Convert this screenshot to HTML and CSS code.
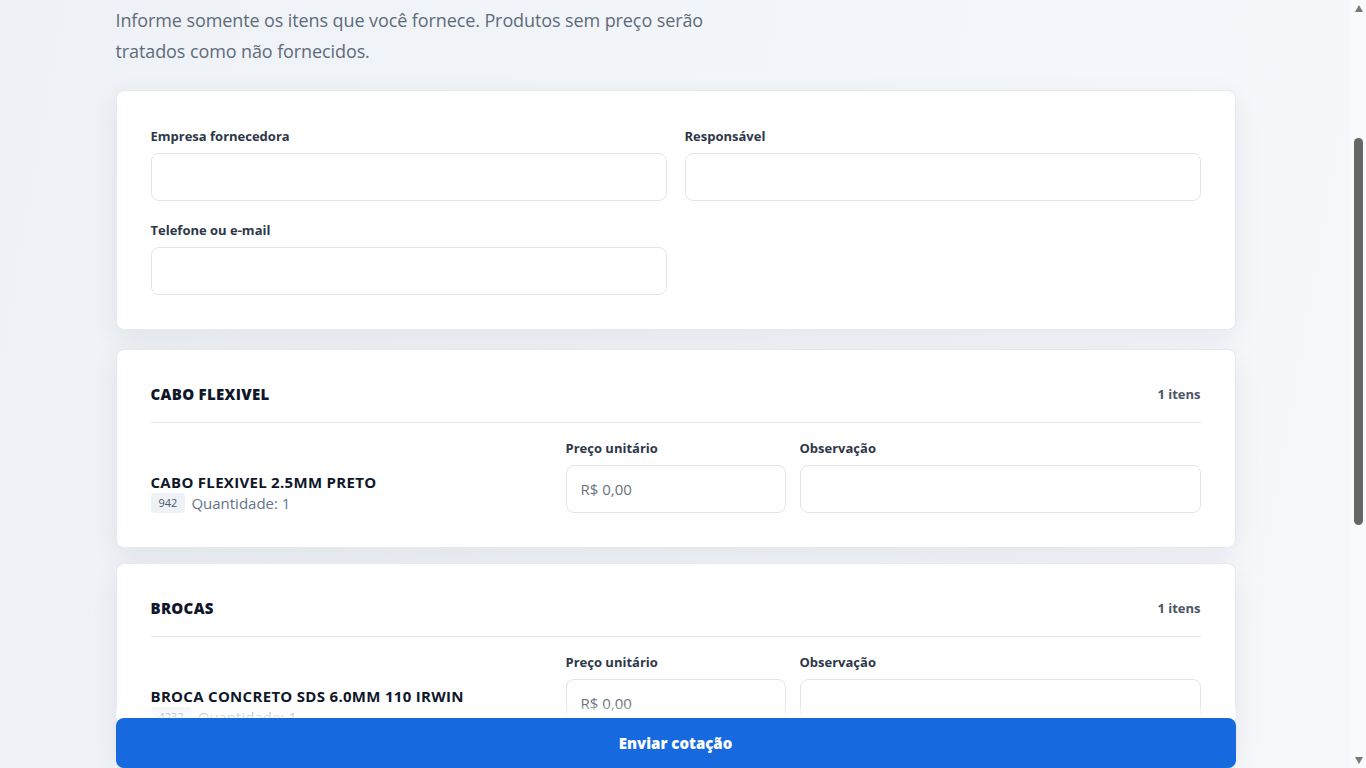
FILE: index.html
```html
<!DOCTYPE html>
<html lang="pt-BR">
<head>
    <meta charset="UTF-8">
    <meta name="viewport" content="width=device-width, initial-scale=1.0">
    <title>Cotação de preços</title>
    <link rel="stylesheet" href="styles.css">
</head>
<body>
    <div class="screen">
        <div class="viewport">
            <main class="page">
                <p class="intro">Informe somente os itens que você fornece. Produtos sem preço serão tratados como não fornecidos.</p>

                <!-- Dados do fornecedor -->
                <section class="card supplier">
                    <div class="field">
                        <label for="empresa">Empresa fornecedora</label>
                        <input type="text" id="empresa">
                    </div>
                    <div class="field">
                        <label for="responsavel">Responsável</label>
                        <input type="text" id="responsavel">
                    </div>
                    <div class="field">
                        <label for="contato">Telefone ou e-mail</label>
                        <input type="text" id="contato">
                    </div>
                </section>

                <!-- Grupos de itens -->
                <section class="card group">
                    <div class="group-head">
                        <h2>CABO FLEXIVEL</h2>
                        <span class="count">1 itens</span>
                    </div>
                    <div class="item">
                        <div class="item-info">
                            <div class="item-name">CABO FLEXIVEL 2.5MM PRETO</div>
                            <div class="item-meta"><span class="code">942</span>Quantidade: 1</div>
                        </div>
                        <div class="field">
                            <label>Preço unitário</label>
                            <input type="text" placeholder="R$ 0,00">
                        </div>
                        <div class="field">
                            <label>Observação</label>
                            <input type="text">
                        </div>
                    </div>
                </section>

                <section class="card group">
                    <div class="group-head">
                        <h2>BROCAS</h2>
                        <span class="count">1 itens</span>
                    </div>
                    <div class="item">
                        <div class="item-info">
                            <div class="item-name">BROCA CONCRETO SDS 6.0MM 110 IRWIN</div>
                            <div class="item-meta"><span class="code">4232</span>Quantidade: 1</div>
                        </div>
                        <div class="field">
                            <label>Preço unitário</label>
                            <input type="text" placeholder="R$ 0,00">
                        </div>
                        <div class="field">
                            <label>Observação</label>
                            <input type="text">
                        </div>
                    </div>
                </section>
            </main>

            <!-- Botão fixo de envio -->
            <div class="submit-bar">
                <div class="submit-inner">
                    <button type="button" class="submit-btn">Enviar cotação</button>
                </div>
            </div>
        </div>

        <!-- Barra de rolagem -->
        <div class="scrollbar" aria-hidden="true">
            <span class="arrow arrow-up"></span>
            <span class="thumb"></span>
            <span class="arrow arrow-down"></span>
        </div>
    </div>
</body>
</html>
```

FILE: styles.css
```css
* {
    margin: 0;
    padding: 0;
    box-sizing: border-box;
    font-family: 'Open Sans', 'Noto Sans', sans-serif;
}

body {
    background-color: #f3f5f9;
}

.screen {
    display: flex;
    height: 768px;
    overflow: hidden;
}

.viewport {
    flex: 1;
    position: relative;
    overflow: hidden;
    background: linear-gradient(100deg, #eef2f6 0%, #f2f5f9 55%, #f6f8fc 100%);
}

.page {
    max-width: 1120px;
    margin: 0 auto;
    padding-top: 5px;
}

.intro {
    max-width: 600px;
    color: #5f6b7a;
    font-size: 18px;
    line-height: 31px;
    letter-spacing: -0.1px;
    margin-bottom: 23px;
}

.card {
    background-color: white;
    border: 1px solid #e6e9ee;
    border-radius: 8px;
    box-shadow: 0 8px 28px rgba(15, 23, 42, 0.07);
    padding: 36px 34px 34px;
}

.supplier {
    display: grid;
    grid-template-columns: 1fr 1fr;
    column-gap: 18px;
    row-gap: 20px;
    margin-bottom: 19px;
}

.field {
    display: flex;
    flex-direction: column;
    gap: 8px;
}

.field label {
    color: #2d3748;
    font-size: 13px;
    font-weight: 700;
    line-height: 18px;
}

.field input {
    height: 48px;
    width: 100%;
    border: 1px solid #e1e5ea;
    border-radius: 8px;
    background: white;
    padding: 0 14px;
    font-size: 15px;
    color: #1f2937;
    outline: none;
}

.field input::placeholder {
    color: #6b7280;
}

.group {
    padding-top: 34px;
    margin-bottom: 15px;
}

.group-head {
    display: flex;
    justify-content: space-between;
    align-items: center;
    padding-bottom: 18px;
    border-bottom: 1px solid #e3e6ea;
    margin-bottom: 16px;
}

.group-head h2 {
    color: #0f172a;
    font-size: 15px;
    font-weight: 800;
    line-height: 20px;
    letter-spacing: 0.3px;
}

.count {
    color: #4b5563;
    font-size: 13px;
    font-weight: 700;
    line-height: 20px;
}

.item {
    display: grid;
    grid-template-columns: 1fr 220px 1fr;
    gap: 14px;
    align-items: end;
}

.item-info {
    margin-bottom: -1px;
}

.item-name {
    color: #0f172a;
    font-size: 15px;
    font-weight: 700;
    line-height: 20px;
    letter-spacing: 0.3px;
}

.item-meta {
    display: flex;
    align-items: center;
    gap: 6px;
    height: 22px;
    color: #64748b;
    font-size: 15px;
}

.code {
    background-color: #eef2f7;
    color: #4b5563;
    font-size: 11px;
    line-height: 20px;
    padding: 0 8px;
    border-radius: 4px;
}

.submit-bar {
    position: absolute;
    left: 0;
    right: 0;
    bottom: 0;
}

.submit-inner {
    max-width: 1120px;
    margin: 0 auto;
    padding-top: 12px;
    background: linear-gradient(to bottom, rgba(255, 255, 255, 0.2), rgba(255, 255, 255, 0.85) 12px, transparent 12px);
}

.submit-btn {
    display: block;
    width: 100%;
    height: 50px;
    border: none;
    border-radius: 8px;
    background-color: #1769e0;
    color: white;
    font-size: 15px;
    font-weight: 800;
    cursor: pointer;
}

/* barra de rolagem desenhada */
.scrollbar {
    width: 15px;
    display: flex;
    flex-direction: column;
    align-items: center;
    background-color: #f9fafc;
    padding: 5px 0 4px;
}

.arrow {
    width: 0;
    height: 0;
    border-left: 4px solid transparent;
    border-right: 4px solid transparent;
}

.arrow-up {
    border-bottom: 7px solid #7a7a7a;
}

.arrow-down {
    margin-top: auto;
    border-top: 7px solid #7a7a7a;
}

.thumb {
    width: 9px;
    height: 387px;
    margin-top: 126px;
    background-color: #666;
    border-radius: 5px;
}
```
